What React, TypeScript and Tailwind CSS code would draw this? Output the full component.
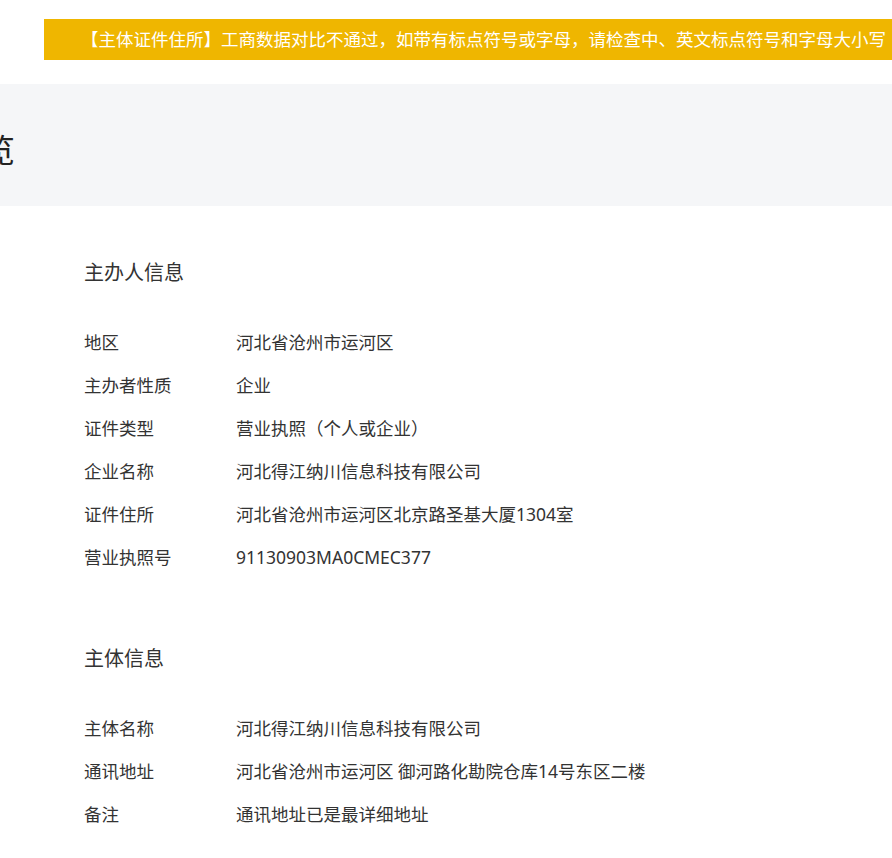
import React from 'react';

const font = { fontFamily: '"Noto Sans", "Noto Sans CJK SC", sans-serif' };

interface Row {
  label: string;
  value: string;
}

const sponsorRows: Row[] = [
  { label: '地区', value: '河北省沧州市运河区' },
  { label: '主办者性质', value: '企业' },
  { label: '证件类型', value: '营业执照（个人或企业）' },
  { label: '企业名称', value: '河北得江纳川信息科技有限公司' },
  { label: '证件住所', value: '河北省沧州市运河区北京路圣基大厦1304室' },
  { label: '营业执照号', value: '91130903MA0CMEC377' },
];

const subjectRows: Row[] = [
  { label: '主体名称', value: '河北得江纳川信息科技有限公司' },
  { label: '通讯地址', value: '河北省沧州市运河区 御河路化勘院仓库14号东区二楼' },
  { label: '备注', value: '通讯地址已是最详细地址' },
];

function Section({ title, rows }: { title: string; rows: Row[] }) {
  return (
    <div>
      <div className="h-[43px] leading-[43px] text-[20px] text-[#333]">{title}</div>
      <div className="mt-[27px]">
        {rows.map((row) => (
          <div key={row.label} className="flex h-[43px] items-center text-[17.5px] text-[#333]">
            <div className="w-[152px] shrink-0">{row.label}</div>
            <div className="whitespace-nowrap">{row.value}</div>
          </div>
        ))}
      </div>
    </div>
  );
}

export default function App() {
  return (
    <div className="w-[892px] h-[858px] overflow-hidden bg-white" style={font}>
      {/* Warning banner */}
      <div className="pt-[19px] pl-[44px]">
        <div className="h-[41px] bg-[#efb600] pl-[37px] flex items-center overflow-hidden">
          <span className="whitespace-nowrap text-[17.5px] text-white">
            【主体证件住所】工商数据对比不通过，如带有标点符号或字母，请检查中、英文标点符号和字母大小写
          </span>
        </div>
      </div>

      {/* Page header */}
      <div className="mt-[24px] h-[122px] bg-[#f5f6f8] overflow-hidden flex items-center">
        <div className="ml-[-113px] pt-[10px] whitespace-nowrap text-[32px] text-[#222]">备案预览</div>
      </div>

      {/* Details */}
      <div className="pl-[84px] pt-[45px]">
        <Section title="主办人信息" rows={sponsorRows} />
        <div className="mt-[58px]">
          <Section title="主体信息" rows={subjectRows} />
        </div>
      </div>
    </div>
  );
}
